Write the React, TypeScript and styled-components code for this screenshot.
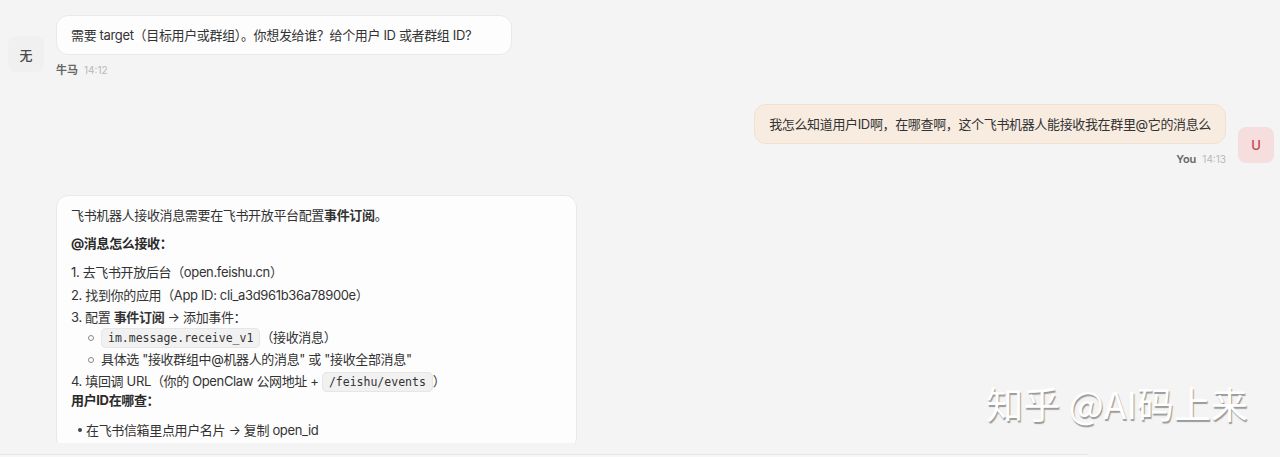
import styled, { createGlobalStyle } from "styled-components";

const GlobalStyle = createGlobalStyle`
  html, body {
    margin: 0;
    padding: 0;
    background: #f4f4f4;
    font-family: Inter, "Noto Sans CJK SC", sans-serif;
    color: #333;
  }
`;

const Page = styled.div`
  position: relative;
  height: 457px;
  overflow: hidden;
  display: flex;
  flex-direction: column;
`;

const Thread = styled.div`
  height: 444px;
  overflow: hidden;
  padding: 15px 6px 0 8px;
  box-sizing: border-box;
  display: flex;
  flex-direction: column;
  gap: 27px;
`;

const Row = styled.div<{ $mine?: boolean; $offset?: number }>`
  display: flex;
  align-items: flex-end;
  gap: 12px;
  margin-top: ${(p) => p.$offset ?? 0}px;
  flex-direction: ${(p) => (p.$mine ? "row-reverse" : "row")};
`;

const TopRow = styled(Row)`
  align-items: flex-start;
`;

const Avatar = styled.div<{ $mine?: boolean; $ghost?: boolean }>`
  width: 36px;
  height: 36px;
  flex: none;
  border-radius: 8px;
  display: flex;
  align-items: center;
  justify-content: center;
  margin-bottom: ${(p) => (p.$mine ? 3 : 5)}px;
  font-size: 13px;
  font-weight: 500;
  visibility: ${(p) => (p.$ghost ? "hidden" : "visible")};
  background: ${(p) => (p.$mine ? "#f7dede" : "#f0f0f0")};
  color: ${(p) => (p.$mine ? "#c0464b" : "#4a4a4a")};
`;

const Column = styled.div<{ $mine?: boolean }>`
  display: flex;
  flex-direction: column;
  align-items: ${(p) => (p.$mine ? "flex-end" : "flex-start")};
`;

const Bubble = styled.div<{ $mine?: boolean; $padRight?: number; $width?: number }>`
  box-sizing: border-box;
  padding: 10px ${(p) => p.$padRight ?? 14}px 10px 14px;
  border-radius: 12px;
  font-size: 13px;
  line-height: 18px;
  letter-spacing: -0.35px;
  color: #333;
  background: ${(p) => (p.$mine ? "#f8ece1" : "#fdfdfd")};
  border: 1px solid ${(p) => (p.$mine ? "#f0e0d0" : "#e9e9e9")};
  ${(p) => (p.$width ? `width: ${p.$width}px;` : "")}
`;

const Meta = styled.div`
  margin-top: 8px;
  display: flex;
  gap: 6px;
  align-items: baseline;
  line-height: 14px;
`;

const Name = styled.span`
  font-size: 11px;
  font-weight: 600;
  color: #666;
`;

const Time = styled.span`
  font-size: 10px;
  color: #b8b8b8;
`;

const Para = styled.p`
  margin: 0 0 10px;
`;

const Heading = styled.p<{ $gap?: number }>`
  margin: 0 0 ${(p) => p.$gap ?? 11}px;
  font-weight: 700;
  color: #2a2a2a;
`;

const Ordered = styled.ol`
  margin: 0;
  padding: 0;
  list-style: none;
`;

const Item = styled.li<{ $gap?: number }>`
  margin-bottom: ${(p) => p.$gap ?? 4}px;
`;

const Nested = styled.ul`
  margin: 2px 0 0;
  padding: 0 0 0 30px;
  list-style: none;
`;

const CircleItem = styled.li`
  position: relative;
  margin-bottom: 3px;
  &::before {
    content: "";
    position: absolute;
    left: -13px;
    top: 7px;
    width: 4px;
    height: 4px;
    border: 1px solid #888;
    border-radius: 50%;
  }
`;

const Bullets = styled.ul`
  margin: 0;
  padding: 0 0 0 15px;
  list-style: none;
`;

const DiscItem = styled.li`
  position: relative;
  &::before {
    content: "";
    position: absolute;
    left: -8px;
    top: 7px;
    width: 4px;
    height: 4px;
    background: #444;
    border-radius: 50%;
  }
`;

const Code = styled.code`
  font-family: "DejaVu Sans Mono", "Liberation Mono", monospace;
  font-size: 11.5px;
  letter-spacing: 0;
  background: #f1f1f1;
  border: 1px solid #e6e6e6;
  border-radius: 5px;
  padding: 2px 6px;
  color: #333;
`;

const Composer = styled.div`
  margin-top: 11px;
  width: 1088px;
  height: 2px;
  border-top: 1px solid #e4e4e4;
  background: #f7f7f7;
`;

const Watermark = styled.div`
  position: absolute;
  right: 32px;
  top: 381px;
  font-size: 37px;
  line-height: 44px;
  white-space: nowrap;
  color: #ffffff;
  text-shadow: 1px 2px 1px #9a9a9a;
  font-family: "Noto Sans CJK SC", sans-serif;
`;

export default function App() {
  return (
    <>
      <GlobalStyle />
      <Page>
        <Thread>
          <Row>
            <Avatar>无</Avatar>
            <Column>
              <Bubble $padRight={40}>
                需要 target（目标用户或群组）。你想发给谁？给个用户 ID 或者群组 ID?
              </Bubble>
              <Meta>
                <Name>牛马</Name>
                <Time>14:12</Time>
              </Meta>
            </Column>
          </Row>

          <Row $mine>
            <Avatar $mine>U</Avatar>
            <Column $mine>
              <Bubble $mine>
                我怎么知道用户ID啊，在哪查啊，这个飞书机器人能接收我在群里@它的消息么
              </Bubble>
              <Meta>
                <Name>You</Name>
                <Time>14:13</Time>
              </Meta>
            </Column>
          </Row>

          <TopRow $offset={2}>
            <Avatar $ghost>无</Avatar>
            <Column>
              <Bubble $width={521}>
                <Para>
                  飞书机器人接收消息需要在飞书开放平台配置<b>事件订阅</b>。
                </Para>
                <Heading>@消息怎么接收：</Heading>
                <Ordered>
                  <Item $gap={5}>1. 去飞书开放后台（open.feishu.cn）</Item>
                  <Item $gap={4}>2. 找到你的应用（App ID: cli_a3d961b36a78900e）</Item>
                  <Item $gap={4}>
                    3. 配置 <b>事件订阅</b> → 添加事件：
                    <Nested>
                      <CircleItem>
                        <Code>im.message.receive_v1</Code>（接收消息）
                      </CircleItem>
                      <CircleItem>具体选 "接收群组中@机器人的消息" 或 "接收全部消息"</CircleItem>
                    </Nested>
                  </Item>
                  <Item $gap={0}>
                    4. 填回调 URL（你的 OpenClaw 公网地址 + <Code>/feishu/events</Code>）
                  </Item>
                </Ordered>
                <Heading $gap={12}>用户ID在哪查：</Heading>
                <Bullets>
                  <DiscItem>在飞书信箱里点用户名片 → 复制 open_id</DiscItem>
                </Bullets>
              </Bubble>
            </Column>
          </TopRow>
        </Thread>
        <Composer />
        <Watermark>知乎 @AI码上来</Watermark>
      </Page>
    </>
  );
}
